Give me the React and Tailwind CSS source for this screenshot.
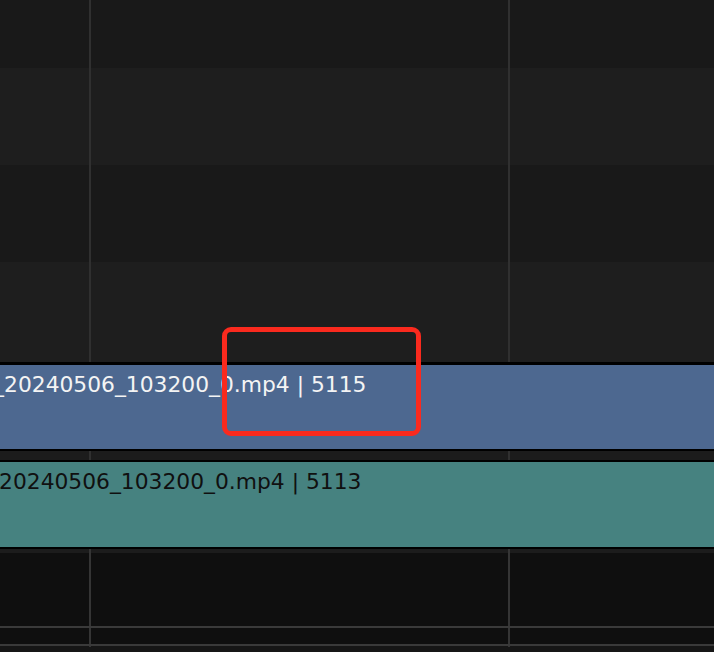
import React from 'react'

const GridRow = ({ height, bg, line = 'bg-[#303030]' }) => (
  <div className={`flex ${height} ${bg}`}>
    <div className="w-[89px]" />
    <div className={`w-[2px] ${line}`} />
    <div className="w-[417px]" />
    <div className={`w-[2px] ${line}`} />
    <div className="flex-1" />
  </div>
)

const Strip = ({ height, bg, text, textColor, offset }) => (
  <div className={`${height} ${bg} overflow-hidden whitespace-nowrap pt-[8px]`}>
    <div
      className={`${offset} text-[21.8px] leading-[24px] ${textColor}`}
      style={{ fontFamily: '"DejaVu Sans", Verdana, sans-serif' }}
    >
      {text}
    </div>
  </div>
)

export default function App() {
  return (
    <div className="relative w-[714px] h-[652px] overflow-hidden bg-[#0f0f0f]">
      {/* channels */}
      <GridRow height="h-[68px]" bg="bg-[#191919]" />
      <GridRow height="h-[97px]" bg="bg-[#1e1e1e]" />
      <GridRow height="h-[97px]" bg="bg-[#191919]" />
      <GridRow height="h-[100px]" bg="bg-[#1e1e1e]" />

      {/* strips */}
      <div className="h-[3px] bg-black" />
      <Strip
        height="h-[84px]"
        bg="bg-[#4d6890]"
        textColor="text-[#f4f4f4]"
        offset="-ml-[45px]"
        text="VID_20240506_103200_0.mp4 | 5115"
      />
      <div className="h-[2px] bg-black" />
      <GridRow height="h-[9px]" bg="bg-[#1c1c1c]" />
      <div className="h-[2px] bg-black" />
      <Strip
        height="h-[85px]"
        bg="bg-[#468280]"
        textColor="text-[#101010]"
        offset="-ml-[50px]"
        text="VID_20240506_103200_0.mp4 | 5113"
      />
      <div className="h-[2px] bg-black" />

      {/* lower area */}
      <GridRow height="h-[4px]" bg="bg-[#1c1c1c]" line="bg-[#353535]" />
      <GridRow height="h-[73px]" bg="bg-[#0f0f0f]" line="bg-[#353535]" />
      <div className="h-[2px] bg-[#3a3a3a]" />
      <GridRow height="h-[16px]" bg="bg-[#0f0f0f]" line="bg-[#353535]" />
      <div className="h-[2px] bg-[#3a3a3a]" />
      <GridRow height="h-[1px]" bg="bg-[#161616]" line="bg-[#353535]" />
      <div className="h-[5px] bg-[#161616]" />

      {/* annotation */}
      <div className="absolute left-[222px] top-[327px] w-[199px] h-[109px] rounded-[9px] border-[5px] border-[#fa2a1e]" />
    </div>
  )
}
